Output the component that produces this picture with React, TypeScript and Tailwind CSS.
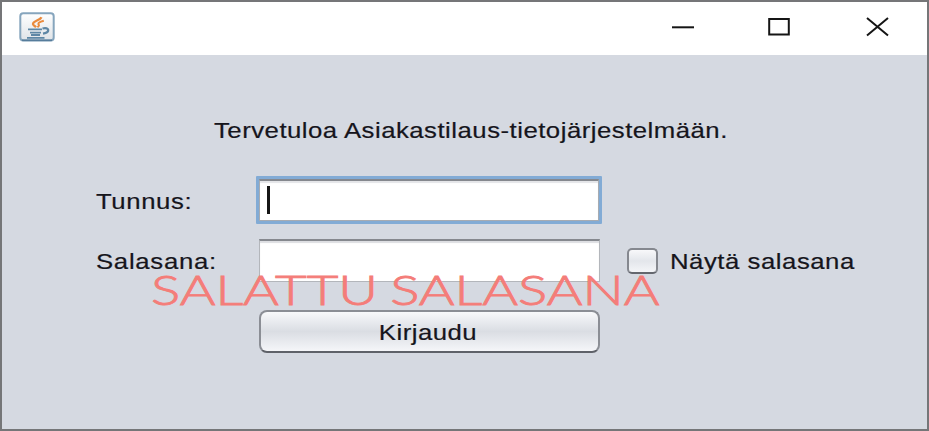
import React from "react";

function JavaIcon() {
  return (
    <svg width="36" height="30" viewBox="0 0 36 30" fill="none">
      <defs>
        <linearGradient id="tile" x1="0" y1="0" x2="0" y2="1">
          <stop offset="0" stopColor="#ffffff" />
          <stop offset="1" stopColor="#dfe3e7" />
        </linearGradient>
      </defs>
      <rect x="1.3" y="1.2" width="33.4" height="27.4" rx="3" fill="url(#tile)" stroke="#86a5bd" strokeWidth="2" />
      <path d="M3 28.3H33" stroke="#567c9b" strokeWidth="1.6" />
      <path d="M22.5 5.2C21 8.5 13.6 9 14 12.2C14.2 13.6 16 14 17 15.2" stroke="#ea8a3c" strokeWidth="2.3" />
      <path d="M24.8 8.8C20.5 9.8 18.5 11.2 19.8 12.8C20.4 13.7 19.6 14.4 18.4 15.3" stroke="#ea8a3c" strokeWidth="2" />
      <path d="M9 17.4H23M11 20.6H22M12 23H21M8 25.8H25.5" stroke="#5e87a5" strokeWidth="1.8" />
      <path d="M23.5 16.5C30.5 14.7 31.5 20.2 24 21.6" stroke="#5e87a5" strokeWidth="2.3" />
    </svg>
  );
}

export default function App() {
  return (
    <div className="relative flex h-[431px] w-[929px] flex-col overflow-hidden border-2 border-[#757678] bg-[#d5d9e1] font-['Liberation_Sans',Arial,sans-serif] text-[22px] text-[#16151c]">
      <header className="flex h-[53px] shrink-0 items-start bg-white pl-[17px]">
        <div className="mt-[10px]">
          <JavaIcon />
        </div>
        <svg className="mt-[13px] ml-[617px]" width="220" height="24" viewBox="0 0 220 24" fill="none" stroke="#151515" strokeWidth="2">
          <path d="M0 12.3H22" />
          <path d="M97.2 4H116.8V19.6H97.2Z" />
          <path d="M195 3L216 20.5M216 3L195 20.5" />
        </svg>
      </header>

      <main className="flex flex-1 flex-col [-webkit-text-stroke:0.2px_#16151c]">
        <p className="mt-[64px] ml-[212px] h-[24px] w-max origin-left scale-x-[1.17] leading-[24px] tracking-[0.42px] whitespace-nowrap">
          Tervetuloa Asiakastilaus-tietojärjestelmään.
        </p>

        <div className="mt-[33px] flex h-[48px] items-center pl-[94px]">
          <label className="w-[160px]">
            <span className="mt-[2px] inline-block origin-left scale-x-[1.17] tracking-[0.5px]">Tunnus:</span>
          </label>
          <div className="h-[48px] w-[346px] rounded-[1px] border-[3px] border-[#82abd5]">
            <div className="flex h-full items-start border border-t-2 border-[#a7abb1] border-t-[#85888e] bg-white pt-[5px] pl-[7px] shadow-[inset_0_2px_1px_#e4e5e8]">
              <span className="h-[28px] w-[3px] bg-[#161616]" />
            </div>
          </div>
        </div>

        <div className="mt-[15px] flex h-[43px] items-center pl-[94px]">
          <label className="w-[163px]">
            <span className="mt-[2px] inline-block origin-left scale-x-[1.17] tracking-[0.6px]">Salasana:</span>
          </label>
          <div className="h-[43px] w-[341px] border border-t-2 border-[#b3b6bb] border-t-[#85888e] bg-white shadow-[inset_0_2px_1px_#dddee2]" />
          <span className="ml-[27px] h-[26px] w-[31px] rounded-[5px] border-2 border-[#85888f] border-b-[#64676e] bg-linear-to-b from-[#f8f8fa] via-[#e3e6eb] to-[#f4f5f8]" />
          <span className="mt-[2px] ml-[12px] inline-block origin-left scale-x-[1.17] tracking-[0.45px] whitespace-nowrap">Näytä salasana</span>
        </div>

        <button className="mt-[28px] ml-[257px] flex h-[43px] w-[341px] items-center justify-center rounded-[8px] border-2 border-[#8b8e95] border-b-[#5f6269] bg-linear-to-b from-[#f8f9fb] via-[#dadde3] to-[#f5f6f9]">
          <span className="mt-[2px] mr-[3px] inline-block scale-x-[1.17] tracking-[0.4px]">Kirjaudu</span>
        </button>
      </main>

      <div className="absolute top-[262px] left-[149px] origin-left scale-x-[1.3] font-['Lato',sans-serif] text-[42px] leading-[50px] font-light [word-spacing:-2px] whitespace-nowrap text-[#f47d79] [-webkit-text-stroke:0.9px_#f47d79]">
        SALATTU SALASANA
      </div>
    </div>
  );
}
